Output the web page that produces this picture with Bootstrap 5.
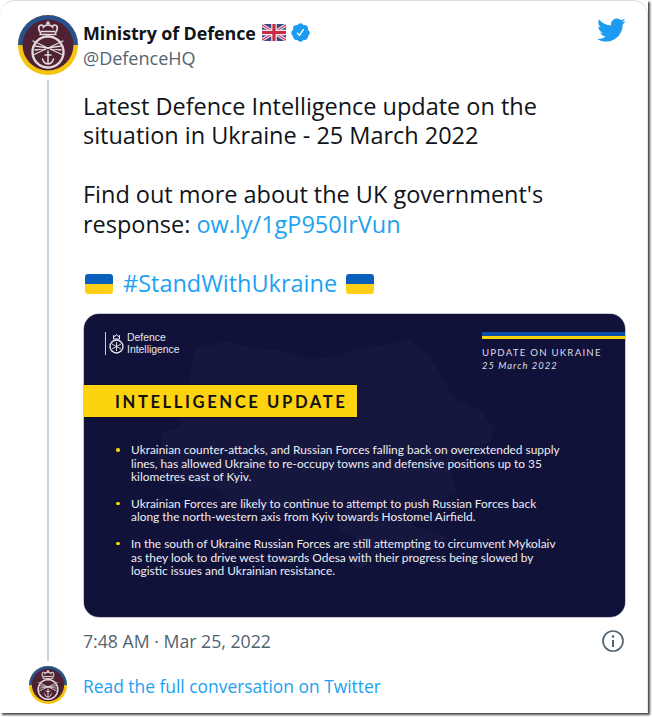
<!DOCTYPE html>
<html lang="en">
<head>
<meta charset="utf-8">
<title>Ministry of Defence tweet</title>
<link href="https://cdn.jsdelivr.net/npm/bootstrap@5.3.0/dist/css/bootstrap.min.css" rel="stylesheet">
<style>
html,body{background:#fff;margin:0;overflow:hidden}
body{width:652px;height:717px;font-family:"Open Sans","Noto Sans",sans-serif;color:#0f1419}
.shot{width:648px;height:713px;background:#fff;box-shadow:2px 2px 2px #4a4a4a}
.tweetbox{height:713px;background:#fff;border-top:1.5px solid #d5dde2;border-right:1.5px solid #e3e8eb;border-top-left-radius:15px;border-top-right-radius:15px;padding:13.5px 21px 0 18px}
.rail{width:60px;flex:none}
.railend{height:46px}
.ava{width:60px;height:60px;display:block}
.ava-sm{width:38px;height:38px;display:block;flex:none}
.thread{width:2px;background:#c9d6df;margin:5px auto 6px 29px;flex-grow:1}
.tmain{width:543px;margin-left:5px;min-width:0}
.uhead{padding-top:6px}
.uname{font-size:17.9px;font-weight:700;line-height:24px;letter-spacing:-.1px;white-space:nowrap}
.flaguk{margin-left:6px}
.uhandle{font-size:18px;line-height:22px;color:#536471;margin-top:2px}
.tbody{font-size:23.5px;line-height:29.5px;margin-top:23px;letter-spacing:-.02px;white-space:pre-line}
.tbody a,.readlink{color:#1da1f2;text-decoration:none}
.flagua{display:inline-block;width:28px;height:20px;border-radius:3px;background:linear-gradient(#0b5fbd 50%,#fdd017 50%);vertical-align:-2px}
.flagua.first{margin:0 10px 0 2px}
.flagua.last{margin-left:9px}
.pic{position:relative;width:541px;height:303px;margin:16px 0 0 1px;border-radius:15px;overflow:hidden;background:#11123a;color:#f1f1f4;font-family:Lato,sans-serif;box-shadow:0 0 0 .5px #8d93a3}
.pic-map{position:absolute;left:0;top:0;width:541px;height:303px}
.pic-in{position:relative}
.pic-top{height:71px;padding:18px 0 0 21px}
.dilogo{display:flex;align-items:center;height:23px;border-left:1px solid #c9cad4;padding-left:3px;gap:3px;font-family:"Liberation Sans",sans-serif;font-size:10.4px;line-height:12px;color:#e7e7ec}
.updblock{width:143px;padding-top:18px;font-size:9.7px;line-height:13px;letter-spacing:1.2px;color:#dcdde4}
.ustripe{height:7px;background:linear-gradient(#0b4fa6 0 4px,#f6d400 4px 7px);margin-bottom:7px}
.udate{font-style:italic;font-size:9.4px;letter-spacing:1.05px}
.banner{width:273px;height:32px;background:#fdd20e;color:#111;font-size:16.6px;font-weight:700;letter-spacing:2.6px;line-height:34px;padding-left:31px;white-space:nowrap;box-shadow:0 0 2px #05051c}
.bullets{list-style:none;margin:26px 0 0;padding:0 0 0 47px;font-size:11.9px;line-height:13.6px;color:#eeeef3}
.bullets li{position:relative;margin-bottom:13px;white-space:nowrap}
.bullets li::before{content:"";position:absolute;left:-15px;top:5px;width:3.5px;height:3.5px;border-radius:50%;background:#f5d90a}
.tfoot{height:48px;font-size:17.7px;color:#536471;padding-right:1px}
.readrow{height:40px;margin-left:-54px;gap:16px;font-size:17.4px}
.readlink{padding-top:2px}
</style>
</head>
<body>
<svg width="0" height="0" class="d-block" aria-hidden="true">
<defs>
<symbol id="crest" viewBox="0 0 60 60">
<circle cx="30" cy="30" r="30" fill="#f4c50f"/>
<path d="M0 30a30 30 0 0 1 60 0z" fill="#27508f"/>
<circle cx="30" cy="30" r="25.500" fill="#4f2233"/>
<g fill="none" stroke="#e2dadc" stroke-linecap="round">
<circle cx="30" cy="37" r="15.500" stroke-width="2.400" stroke-dasharray="1.400 .9"/>
<path d="M22.500 18c-3-4-2-8 1-8 1.500 0 2 1 2 2 1-1 3-2 4.500-2s3.500 1 4.500 2c0-1 .5-2 2-2 3 0 4 4 1 8" stroke-width="1.700"/>
<path d="M22 19.500h16M23 16.500h14" stroke-width="1.500"/>
<path d="M15 26l30 14M45 26L15 40M17 35l26-4M43 35l-26-4" stroke-width="1.300"/>
<path d="M30 36v13M27 40h6M24.500 44c1 3 3 5 5.500 5s4.500-2 5.500-5" stroke-width="1.500"/>
</g>
<path d="M27.500 9.500l2.500-4 2.500 4z" fill="#e2dadc"/>
</symbol>
</defs>
</svg>
<div class="shot">
<div class="tweetbox d-flex">
<div class="rail d-flex flex-column">
<svg class="ava"><use href="#crest"/></svg>
<div class="thread"></div>
<div class="railend"></div>
</div>
<div class="tmain">
<div class="d-flex justify-content-between">
<div class="uhead">
<div class="uname d-flex align-items-center">Ministry of Defence
<svg class="flaguk" width="24" height="17" viewBox="0 0 24 17" role="img" aria-label="UK flag"><rect width="24" height="17" rx="1.500" fill="#3a4a86"/><path d="M0 1l24 15M24 1L0 16" stroke="#f3eef0" stroke-width="3.200"/><path d="M0 1l24 15M24 1L0 16" stroke="#d8374f" stroke-width="1.200"/><path d="M12 0v17M0 8.500h24" stroke="#f3eef0" stroke-width="5.500"/><path d="M12 0v17M0 8.500h24" stroke="#cf2a43" stroke-width="3.200"/></svg>
<svg class="ms-1" width="21" height="21" viewBox="0 0 24 24" role="img" aria-label="Verified"><path fill="#1d9bf0" d="M22.500 12.500c0-1.580-.875-2.950-2.148-3.600.154-.435.238-.905.238-1.400 0-2.210-1.710-3.998-3.818-3.998-.470 0-.920.084-1.336.250C14.818 2.415 13.510 1.500 12 1.500s-2.816.917-3.437 2.250c-.415-.165-.866-.250-1.336-.250-2.110 0-3.818 1.790-3.818 4 0 .494.083.964.237 1.400-1.272.650-2.147 2.018-2.147 3.600 0 1.495.782 2.798 1.942 3.486-.020.170-.032.340-.032.514 0 2.210 1.708 4 3.818 4 .470 0 .920-.086 1.335-.250.620 1.334 1.926 2.250 3.437 2.250 1.512 0 2.818-.916 3.437-2.250.415.163.865.248 1.336.248 2.110 0 3.818-1.790 3.818-4 0-.174-.012-.344-.033-.513 1.158-.687 1.943-1.990 1.943-3.484zm-6.616-3.334l-4.334 6.500c-.145.217-.382.334-.625.334-.143 0-.288-.040-.416-.126l-.115-.094-2.415-2.415c-.293-.293-.293-.768 0-1.060s.768-.294 1.060 0l1.770 1.767 3.825-5.740c.230-.345.696-.436 1.040-.207.346.230.440.696.210 1.040z"/></svg>
</div>
<div class="uhandle">@DefenceHQ</div>
</div>
<svg width="30" height="30" viewBox="0 0 24 24" role="img" aria-label="Twitter"><path fill="#1d9bf0" d="M23.643 4.937c-.835.370-1.732.620-2.675.733.962-.576 1.700-1.490 2.048-2.578-.900.534-1.897.922-2.958 1.130-.850-.904-2.060-1.470-3.400-1.470-2.572 0-4.658 2.086-4.658 4.660 0 .364.042.718.120 1.060-3.873-.195-7.304-2.050-9.602-4.868-.400.690-.630 1.490-.630 2.342 0 1.616.823 3.043 2.072 3.878-.764-.025-1.482-.234-2.110-.583v.060c0 2.257 1.605 4.140 3.737 4.568-.392.106-.803.162-1.227.162-.300 0-.593-.028-.877-.082.593 1.850 2.313 3.198 4.352 3.234-1.595 1.250-3.604 1.995-5.786 1.995-.376 0-.747-.022-1.112-.065 2.062 1.323 4.510 2.093 7.140 2.093 8.570 0 13.255-7.098 13.255-13.254 0-.200-.005-.402-.014-.602.910-.658 1.700-1.477 2.323-2.410z"/></svg>
</div>
<div class="tbody">Latest Defence Intelligence update on the
situation in Ukraine - 25 March 2022

Find out more about the UK government's
response: <a href="#">ow.ly/1gP950IrVun</a>

<span class="flagua first"></span><a href="#">#StandWithUkraine</a><span class="flagua last"></span></div>
<div class="pic">
<svg class="pic-map" viewBox="0 0 541 303" aria-hidden="true"><path fill="#16173f" d="M112 35l30-8 26 7 30 3 24 8 24-1 34-10 26-4 20-4 18 14 16 26 10 18 26 12 14 18-2 14-30 8-12 20 8 22-26 14-24 0 6 20 34 12-20 16-44-8-22 24-14-8 8-24-18-8 8-22-40-4-30 10-40-6-20-20-46-4-14-22 8-30 14-4z"/></svg>
<div class="pic-in">
<div class="d-flex justify-content-between">
<div class="pic-top">
<div class="dilogo">
<svg width="15" height="23" viewBox="0 0 15 23" aria-hidden="true"><g fill="none" stroke="#e7e7ec"><circle cx="7.500" cy="14.500" r="6.500" stroke-width="1.400"/><path d="M3 12l9 5M12 12l-9 5M7.500 10v9" stroke-width=".9"/><path d="M4.500 7V3.500l1.500 1 1.500-2 1.500 2 1.500-1V7z" stroke-width="1"/></g></svg>
<div>Defence<br>Intelligence</div>
</div>
</div>
<div class="updblock">
<div class="ustripe"></div>
<div>UPDATE ON UKRAINE</div>
<div class="udate">25 March 2022</div>
</div>
</div>
<div class="banner">INTELLIGENCE UPDATE</div>
<ul class="bullets">
<li>Ukrainian counter-attacks, and Russian Forces falling back on overextended supply<br>lines, has allowed Ukraine to re-occupy towns and defensive positions up to 35<br>kilometres east of Kyiv.</li>
<li>Ukrainian Forces are likely to continue to attempt to push Russian Forces back<br>along the north-western axis from Kyiv towards Hostomel Airfield.</li>
<li>In the south of Ukraine Russian Forces are still attempting to circumvent Mykolaiv<br>as they look to drive west towards Odesa with their progress being slowed by<br>logistic issues and Ukrainian resistance.</li>
</ul>
</div>
</div>
<div class="tfoot d-flex align-items-center justify-content-between">
<span>7:48 AM · Mar 25, 2022</span>
<svg width="24" height="24" viewBox="0 0 24 24" role="img" aria-label="Info"><circle cx="12" cy="12" r="10" fill="none" stroke="#536471" stroke-width="1.700"/><circle cx="12" cy="7.500" r="1.300" fill="#536471"/><path d="M12 11v7" stroke="#536471" stroke-width="2"/></svg>
</div>
<div class="readrow d-flex align-items-center">
<svg class="ava-sm"><use href="#crest"/></svg>
<a class="readlink" href="#">Read the full conversation on Twitter</a>
</div>
</div>
</div>
</div>
</body>
</html>
